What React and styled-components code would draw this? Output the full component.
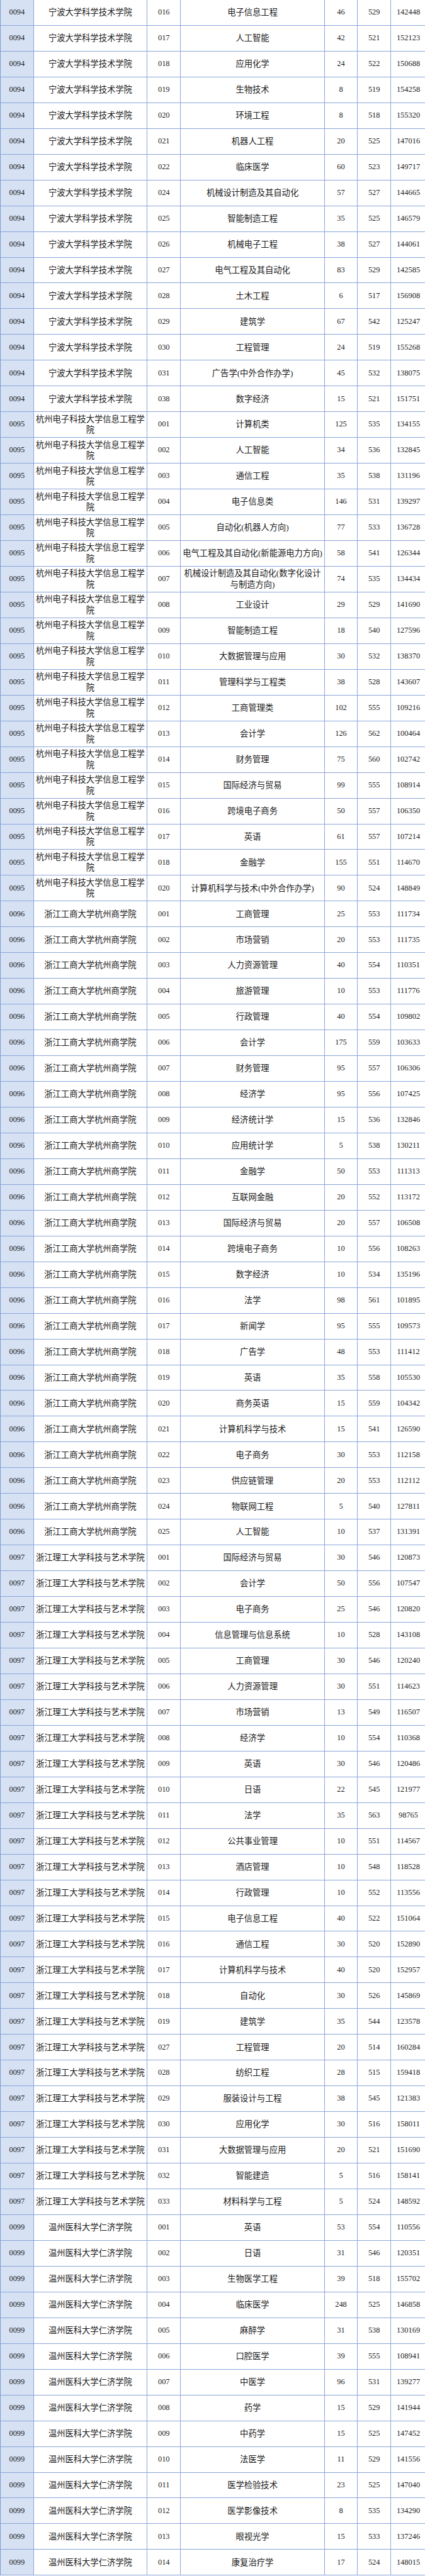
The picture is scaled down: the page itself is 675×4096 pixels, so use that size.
import React from "react";
import styled, { createGlobalStyle } from "styled-components";

const GlobalStyle = createGlobalStyle`
  html, body {
    margin: 0;
    padding: 0;
    background: #ffffff;
  }
  body {
    font-family: "Liberation Serif", "Noto Sans CJK SC", serif;
    color: #1c1c1c;
  }
`;

// 专业代号, 专业名称, 计划数, 最低分, 位次
const schools = [
  {
    code: "0094",
    name: "宁波大学科学技术学院",
    rows: [
      ["016", "电子信息工程", 46, 529, 142448],
      ["017", "人工智能", 42, 521, 152123],
      ["018", "应用化学", 24, 522, 150688],
      ["019", "生物技术", 8, 519, 154258],
      ["020", "环境工程", 8, 518, 155320],
      ["021", "机器人工程", 20, 525, 147016],
      ["022", "临床医学", 60, 523, 149717],
      ["024", "机械设计制造及其自动化", 57, 527, 144665],
      ["025", "智能制造工程", 35, 525, 146579],
      ["026", "机械电子工程", 38, 527, 144061],
      ["027", "电气工程及其自动化", 83, 529, 142585],
      ["028", "土木工程", 6, 517, 156908],
      ["029", "建筑学", 67, 542, 125247],
      ["030", "工程管理", 24, 519, 155268],
      ["031", "广告学(中外合作办学)", 45, 532, 138075],
      ["038", "数字经济", 15, 521, 151751],
    ],
  },
  {
    code: "0095",
    name: "杭州电子科技大学信息工程学院",
    rows: [
      ["001", "计算机类", 125, 535, 134155],
      ["002", "人工智能", 34, 536, 132845],
      ["003", "通信工程", 35, 538, 131196],
      ["004", "电子信息类", 146, 531, 139297],
      ["005", "自动化(机器人方向)", 77, 533, 136728],
      ["006", "电气工程及其自动化(新能源电力方向)", 58, 541, 126344],
      ["007", "机械设计制造及其自动化(数字化设计与制造方向)", 74, 535, 134434],
      ["008", "工业设计", 29, 529, 141690],
      ["009", "智能制造工程", 18, 540, 127596],
      ["010", "大数据管理与应用", 30, 532, 138370],
      ["011", "管理科学与工程类", 38, 528, 143607],
      ["012", "工商管理类", 102, 555, 109216],
      ["013", "会计学", 126, 562, 100464],
      ["014", "财务管理", 75, 560, 102742],
      ["015", "国际经济与贸易", 99, 555, 108914],
      ["016", "跨境电子商务", 50, 557, 106350],
      ["017", "英语", 61, 557, 107214],
      ["018", "金融学", 155, 551, 114670],
      ["020", "计算机科学与技术(中外合作办学)", 90, 524, 148849],
    ],
  },
  {
    code: "0096",
    name: "浙江工商大学杭州商学院",
    rows: [
      ["001", "工商管理", 25, 553, 111734],
      ["002", "市场营销", 20, 553, 111735],
      ["003", "人力资源管理", 40, 554, 110351],
      ["004", "旅游管理", 10, 553, 111776],
      ["005", "行政管理", 40, 554, 109802],
      ["006", "会计学", 175, 559, 103633],
      ["007", "财务管理", 95, 557, 106306],
      ["008", "经济学", 95, 556, 107425],
      ["009", "经济统计学", 15, 536, 132846],
      ["010", "应用统计学", 5, 538, 130211],
      ["011", "金融学", 50, 553, 111313],
      ["012", "互联网金融", 20, 552, 113172],
      ["013", "国际经济与贸易", 20, 557, 106508],
      ["014", "跨境电子商务", 10, 556, 108263],
      ["015", "数字经济", 10, 534, 135196],
      ["016", "法学", 98, 561, 101895],
      ["017", "新闻学", 95, 555, 109573],
      ["018", "广告学", 48, 553, 111412],
      ["019", "英语", 35, 558, 105530],
      ["020", "商务英语", 15, 559, 104342],
      ["021", "计算机科学与技术", 15, 541, 126590],
      ["022", "电子商务", 30, 553, 112158],
      ["023", "供应链管理", 20, 553, 112112],
      ["024", "物联网工程", 5, 540, 127811],
      ["025", "人工智能", 10, 537, 131391],
    ],
  },
  {
    code: "0097",
    name: "浙江理工大学科技与艺术学院",
    rows: [
      ["001", "国际经济与贸易", 30, 546, 120873],
      ["002", "会计学", 50, 556, 107547],
      ["003", "电子商务", 25, 546, 120820],
      ["004", "信息管理与信息系统", 10, 528, 143108],
      ["005", "工商管理", 30, 546, 120240],
      ["006", "人力资源管理", 30, 551, 114623],
      ["007", "市场营销", 13, 549, 116507],
      ["008", "经济学", 10, 554, 110368],
      ["009", "英语", 30, 546, 120486],
      ["010", "日语", 22, 545, 121977],
      ["011", "法学", 35, 563, 98765],
      ["012", "公共事业管理", 10, 551, 114567],
      ["013", "酒店管理", 10, 548, 118528],
      ["014", "行政管理", 10, 552, 113556],
      ["015", "电子信息工程", 40, 522, 151064],
      ["016", "通信工程", 30, 520, 152890],
      ["017", "计算机科学与技术", 40, 520, 152957],
      ["018", "自动化", 30, 526, 145869],
      ["019", "建筑学", 35, 544, 123578],
      ["027", "工程管理", 20, 514, 160284],
      ["028", "纺织工程", 28, 515, 159418],
      ["029", "服装设计与工程", 38, 545, 121383],
      ["030", "应用化学", 30, 516, 158011],
      ["031", "大数据管理与应用", 20, 521, 151690],
      ["032", "智能建造", 5, 516, 158141],
      ["033", "材料科学与工程", 5, 524, 148592],
    ],
  },
  {
    code: "0099",
    name: "温州医科大学仁济学院",
    rows: [
      ["001", "英语", 53, 554, 110556],
      ["002", "日语", 31, 546, 120351],
      ["003", "生物医学工程", 39, 518, 155702],
      ["004", "临床医学", 248, 525, 146858],
      ["005", "麻醉学", 31, 538, 130169],
      ["006", "口腔医学", 39, 555, 108941],
      ["007", "中医学", 96, 531, 139277],
      ["008", "药学", 15, 529, 141944],
      ["009", "中药学", 15, 525, 147452],
      ["010", "法医学", 11, 529, 141556],
      ["011", "医学检验技术", 23, 525, 147040],
      ["012", "医学影像技术", 8, 535, 134290],
      ["013", "眼视光学", 15, 533, 137246],
      ["014", "康复治疗学", 17, 524, 148015],
    ],
  },
];

const Table = styled.div`
  width: 675px;
  border-left: 1px solid #7f9bd3;
`;

const Row = styled.div`
  display: grid;
  grid-template-columns: 52.7px 180.4px 53.4px 228.2px 52.7px 52.7px 1fr;
  height: 40.96px;
  box-sizing: border-box;
  border-bottom: 1px solid #8ba5d9;
`;

const Cell = styled.div`
  display: flex;
  align-items: center;
  justify-content: center;
  text-align: center;
  box-sizing: border-box;
  padding: 0 1px;
  border-right: 1px solid #8ba5d9;
  background: ${(p) => (p.$head ? "#d6e1f4" : "#ffffff")};
  font-size: ${(p) => (p.$num ? "12.4px" : "13.3px")};
  line-height: 17.5px;
  overflow: hidden;

  &:last-child {
    border-right: none;
  }
`;

export default function App() {
  return (
    <>
      <GlobalStyle />
      <Table>
        {schools.map((s) =>
          s.rows.map(([major, title, plan, score, rank]) => (
            <Row key={s.code + major}>
              <Cell $head $num>
                {s.code}
              </Cell>
              <Cell>{s.name}</Cell>
              <Cell $num>{major}</Cell>
              <Cell>{title}</Cell>
              <Cell $num>{plan}</Cell>
              <Cell $num>{score}</Cell>
              <Cell $num>{rank}</Cell>
            </Row>
          ))
        )}
      </Table>
    </>
  );
}
